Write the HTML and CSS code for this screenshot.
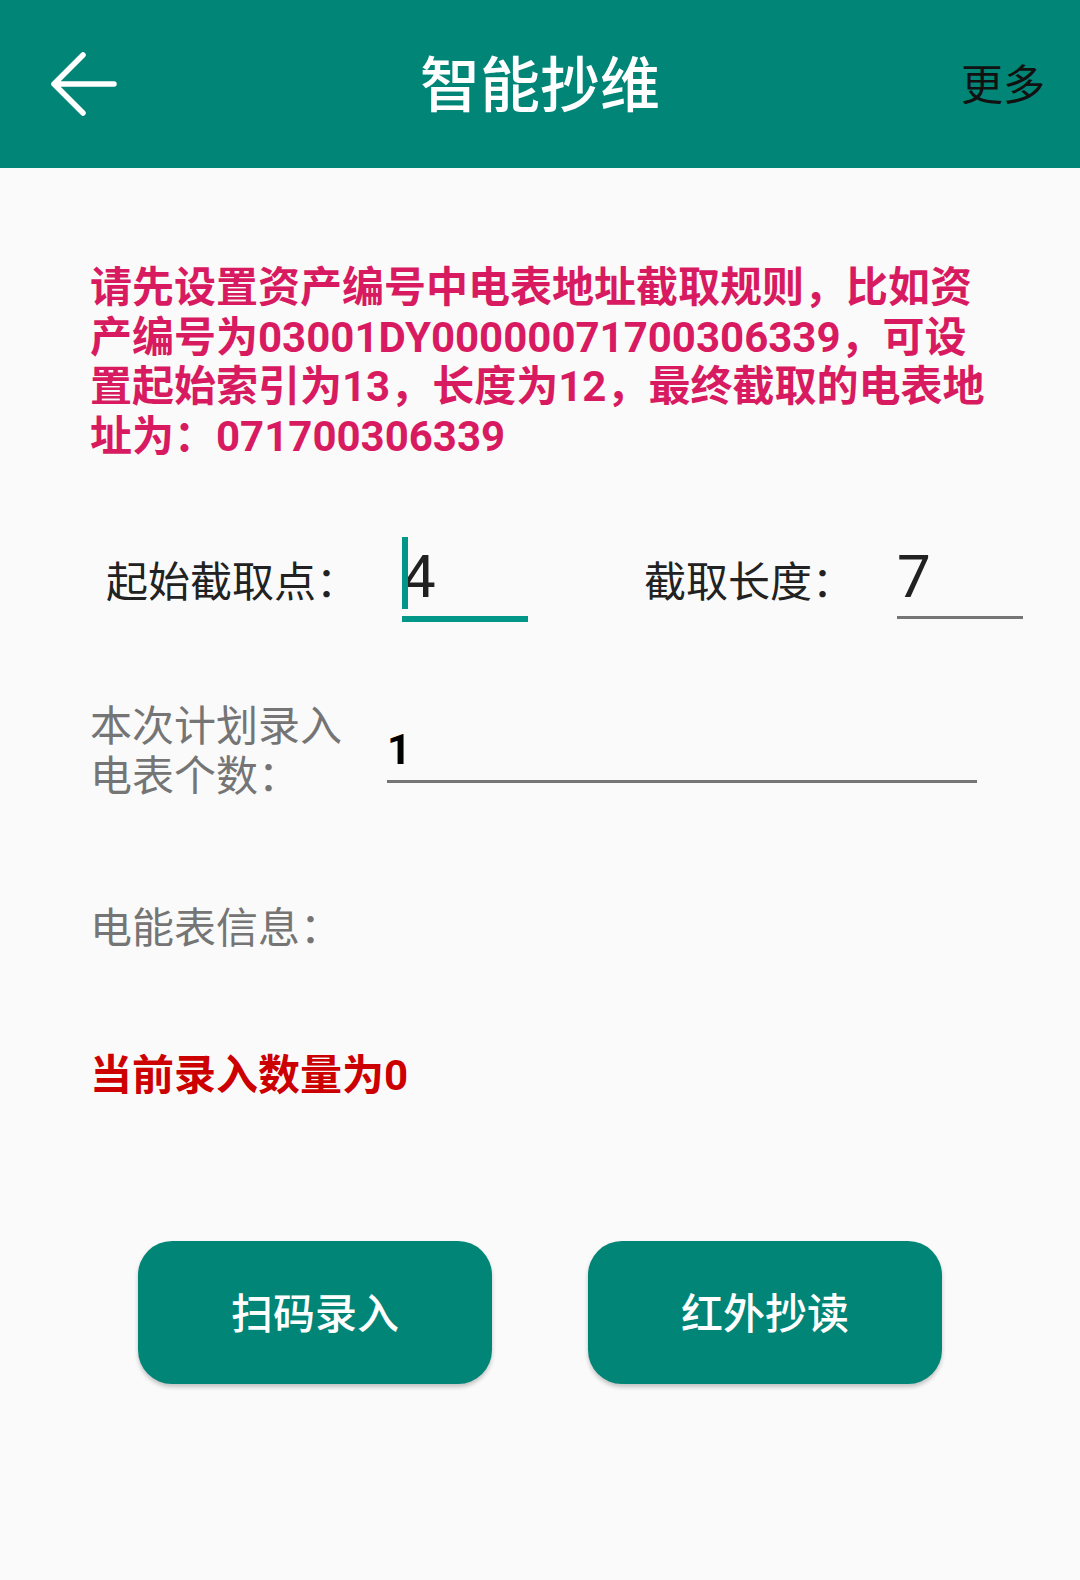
FILE: index.html
```html
<!DOCTYPE html>
<html lang="zh-CN">
<head>
<meta charset="utf-8">
<title>智能抄维</title>
<link rel="stylesheet" href="styles.css">
</head>
<body>
<header class="toolbar">
  <div class="toolbar-left">
    <svg class="back-icon" width="80" height="80" viewBox="0 0 80 80" aria-hidden="true">
      <path d="M70 40 H10 M39 11 L10 40 L39 69" fill="none" stroke="#ffffff" stroke-width="5.5" stroke-linecap="round" stroke-linejoin="round"/>
    </svg>
  </div>
  <h1 class="toolbar-title">智能抄维</h1>
  <div class="toolbar-right"><span class="more">更多</span></div>
</header>

<main class="content">
  <p class="hint">请先设置资产编号中电表地址截取规则，比如资产编号为03001DY00000071700306339，可设置起始索引为13，长度为12，最终截取的电表地址为：071700306339</p>

  <div class="rule-row">
    <span class="label dark">起始截取点：</span>
    <div class="field big focused"><span class="cursor"></span>4</div>
    <span class="spacer"></span>
    <span class="label dark">截取长度：</span>
    <div class="field big">7</div>
  </div>

  <div class="count-row">
    <span class="label grey count-label">本次计划录入电表个数：</span>
    <div class="field count-field">1</div>
  </div>

  <div class="label grey info">电能表信息：</div>

  <div class="status">当前录入数量为0</div>

  <div class="actions">
    <button class="btn">扫码录入</button>
    <button class="btn">红外抄读</button>
  </div>
</main>
</body>
</html>
```

FILE: styles.css
```css
html, body {
  margin: 0;
  padding: 0;
}
body {
  width: 1080px;
  min-height: 1580px;
  background: #fafafa;
  font-family: Roboto, "Noto Sans CJK SC", sans-serif;
}

.toolbar {
  height: 168px;
  background: #008577;
  display: grid;
  grid-template-columns: 1fr auto 1fr;
  align-items: center;
}
.toolbar-left {
  display: flex;
  align-items: center;
  padding-left: 44px;
}
.back-icon {
  display: block;
}
.toolbar-title {
  margin: 0;
  padding-top: 6px;
  color: #ffffff;
  font-size: 60px;
  font-weight: 500;
  line-height: 1;
}
.toolbar-right {
  display: flex;
  justify-content: flex-end;
  padding-right: 35px;
  padding-top: 4px;
}
.more {
  font-size: 42px;
  color: #111111;
  line-height: 1;
}

.content {
  padding-left: 90px;
}

.hint {
  margin: 95px 0 0;
  width: 904px;
  font-size: 42px;
  font-weight: 700;
  line-height: 49.5px;
  color: #d81b60;
}

.label {
  font-size: 42px;
  line-height: 49.5px;
}
.dark { color: #222222; }
.grey { color: #757575; }

.rule-row {
  margin-top: 83px;
  margin-left: 16px;
  display: grid;
  grid-template-columns: 296px 126px 116px 253px 126px;
  align-items: baseline;
}

.field {
  position: relative;
  color: #212121;
  border-bottom: 3px solid #757575;
}
.field.big {
  font-size: 60px;
  line-height: 60px;
  padding-top: 3px;
  padding-bottom: 9px;
}
.field.focused {
  border-bottom: 6px solid #009688;
}
.cursor {
  position: absolute;
  left: 0;
  top: -7px;
  width: 6px;
  height: 72px;
  background: #009688;
}

.count-row {
  margin-top: 80px;
  display: flex;
  align-items: center;
}
.count-label {
  width: 260px;
  margin-right: 37px;
}
.count-field {
  width: 590px;
  font-size: 42px;
  font-weight: 700;
  line-height: 49.5px;
  padding-top: 5px;
  padding-bottom: 6px;
  color: #000000;
}

.info {
  margin-top: 103px;
}

.status {
  margin-top: 97px;
  font-size: 42px;
  font-weight: 700;
  line-height: 49.5px;
  color: #cc0000;
}

.actions {
  margin-top: 141px;
  margin-left: -90px;
  display: flex;
  justify-content: center;
  gap: 96px;
}
.btn {
  width: 354px;
  height: 143px;
  border: none;
  border-radius: 34px;
  background: #008577;
  color: #ffffff;
  font-family: Roboto, "Noto Sans CJK SC", sans-serif;
  font-size: 42px;
  font-weight: 500;
  box-shadow: 0 3px 4px rgba(0, 0, 0, 0.22);
  padding: 0 0 4px;
}
```
